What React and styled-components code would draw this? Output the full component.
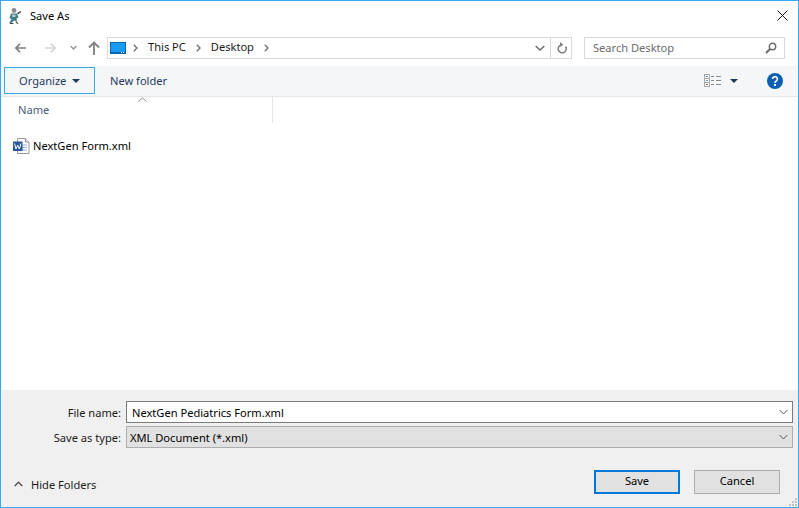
import React from 'react'
import styled, { createGlobalStyle } from 'styled-components'

const GlobalStyle = createGlobalStyle`
  html, body { margin: 0; padding: 0; background: #fff; }
  body { font-family: "Noto Sans", "Open Sans", sans-serif; font-size: 11.1px; color: #000; }
`

const Dialog = styled.div`
  box-sizing: border-box;
  width: 799px;
  height: 508px;
  border: 1px solid #3aa8f0;
  display: flex;
  flex-direction: column;
  background: #fff;
  position: relative;
  overflow: hidden;
`

const TitleBar = styled.div`
  height: 29px;
  flex: none;
  display: flex;
  align-items: center;
  padding: 0 10px 0 6px;
  gap: 7px;
`

const Title = styled.span`
  flex: 1;
  margin-bottom: 1px;
`

const NavRow = styled.div`
  height: 36px;
  flex: none;
  display: flex;
  align-items: center;
  padding: 0 13px;
`

const NavButton = styled.div`
  width: ${p => p.$w}px;
  margin-left: ${p => p.$ml || 0}px;
  display: flex;
  justify-content: center;
  align-items: center;
`

const AddressBar = styled.div`
  box-sizing: border-box;
  width: 465px;
  height: 22px;
  margin: 0 12px 0 6px;
  border: 1px solid #d9d9d9;
  display: flex;
  align-items: center;
  padding-left: 2px;
`

const CrumbText = styled.span`
  margin-bottom: 3px;
  color: #1a1a1a;
`

const CrumbSep = styled.span`
  display: flex;
  margin: 0 10px 0 ${p => p.$first ? 7 : 10}px;
`

const AddressEnd = styled.div`
  margin-left: auto;
  display: flex;
  align-items: center;
  height: 100%;
`

const RefreshBox = styled.div`
  width: 20px;
  height: 100%;
  border-left: 1px solid #d9d9d9;
  margin-left: 5px;
  display: flex;
  align-items: center;
  justify-content: center;
`

const SearchBox = styled.div`
  box-sizing: border-box;
  width: 201px;
  height: 22px;
  border: 1px solid #d9d9d9;
  display: flex;
  align-items: center;
  justify-content: space-between;
  padding: 0 7px 0 8px;
  color: #6d6d6d;
`

const SearchHint = styled.span`
  margin-bottom: 2px;
`

const Toolbar = styled.div`
  box-sizing: border-box;
  height: 31px;
  flex: none;
  background: #f5f6f7;
  border-bottom: 1px solid #e5e5e5;
  display: flex;
  align-items: center;
  padding: 0 15px 1px 3px;
`

const OrganizeButton = styled.div`
  box-sizing: border-box;
  width: 91px;
  height: 27px;
  border: 1px solid #3aa8e0;
  display: flex;
  align-items: center;
  padding-left: 14px;
  gap: 6px;
  color: #1e395b;
`

const NewFolder = styled.span`
  margin-left: 15px;
  color: #1e395b;
`

const ToolbarEnd = styled.div`
  margin-left: auto;
  display: flex;
  align-items: center;
`

const HeaderRow = styled.div`
  height: 26px;
  flex: none;
  display: flex;
  position: relative;
`

const NameColumn = styled.div`
  box-sizing: border-box;
  width: 272px;
  border-right: 1px solid #e5e5e5;
  padding: 5px 0 0 17px;
  color: #4c607a;
`

const SortCaret = styled.svg`
  position: absolute;
  left: 137px;
  top: 0;
`

const FileList = styled.div`
  flex: 1;
  padding: 15px 0 0 12px;
`

const FileRow = styled.div`
  display: flex;
  align-items: center;
  gap: 3px;
  height: 16px;
`

const FileName = styled.span`
  margin-bottom: 2px;
`

const Footer = styled.div`
  box-sizing: border-box;
  height: 117px;
  flex: none;
  background: #f0f0f0;
  padding: 11px 5px 0 0;
  display: flex;
  flex-direction: column;
`

const FieldRow = styled.div`
  display: flex;
  align-items: center;
  height: 22px;
  margin-bottom: 3px;
`

const FieldLabel = styled.label`
  width: 120px;
  text-align: right;
  margin-right: 5px;
  color: #1a1a1a;
`

const Field = styled.div`
  box-sizing: border-box;
  flex: 1;
  height: 100%;
  display: flex;
  align-items: center;
  justify-content: space-between;
  padding: 0 4px 0 ${p => p.$select ? 3 : 5}px;
  border: 1px solid ${p => p.$select ? '#adadad' : '#7a7a7a'};
  background: ${p => p.$select ? '#e1e1e1' : '#fff'};
`

const ActionRow = styled.div`
  display: flex;
  align-items: center;
  margin-top: 19px;
  padding: 0 13px;
`

const HideFolders = styled.div`
  display: flex;
  align-items: center;
  gap: 8px;
  margin: 4px auto 0 0;
  color: #1a1a1a;
`

const DialogButton = styled.div`
  box-sizing: border-box;
  width: 86px;
  height: 24px;
  margin-left: 14px;
  padding-bottom: 3px;
  background: #e1e1e1;
  border: ${p => p.$primary ? '2px solid #0078d7' : '1px solid #adadad'};
  display: flex;
  align-items: center;
  justify-content: center;
`

const Grip = styled.svg`
  position: absolute;
  right: 1px;
  bottom: 1px;
`

const Arrow = ({ dir = 'left', color }) => (
  <svg width="14" height="12" viewBox="0 0 14 12" style={{ transform: dir === 'right' ? 'scaleX(-1)' : 'none' }}>
    <path d="M13 6H2M6.500 1.500 2 6l4.500 4.500" fill="none" stroke={color} strokeWidth="1.800" />
  </svg>
)

const Chevron = ({ color = '#6d6d6d', w = 9, h = 5, sw = 1.200 }) => (
  <svg width={w} height={h + 2} viewBox={`0 0 ${w} ${h + 2}`}>
    <path d={`M.7 1 ${w / 2} ${h}l${w / 2 - 0.7}-${h - 1}`} fill="none" stroke={color} strokeWidth={sw} />
  </svg>
)

const Sep = () => (
  <svg width="5" height="8" viewBox="0 0 5 8">
    <path d="M.8.8 4 4 .8 7.200" fill="none" stroke="#6d6d6d" strokeWidth="1.300" />
  </svg>
)

const Caret = ({ color = '#1e395b' }) => (
  <svg width="8" height="4" viewBox="0 0 8 4"><path d="M0 0h8L4 4z" fill={color} /></svg>
)

const AppIcon = () => (
  <svg width="16" height="18" viewBox="0 0 16 18">
    <circle cx="7" cy="3.500" r="2.400" fill="#8a8f94" />
    <path d="M4 6.500h6l1.500 4-2 1 .5 3-3-1-3 3-1.500-1 2-3.500-2-1z" fill="#3f7f86" />
    <path d="M10 6l3.500-2 .8 1-3 2.500zM3 16h3.500v1H2.500zM9 14l2.500 2.500-1 .8L8.500 15z" fill="#4a4f55" />
    <path d="M5 7.500h3.500v2.500H5z" fill="#b9c2c6" />
  </svg>
)

const DesktopIcon = () => (
  <svg width="16" height="12" viewBox="0 0 16 12">
    <rect x=".5" y=".5" width="15" height="11" fill="#1a9cf5" stroke="#0a64ad" />
    <path d="M1 10h14v1H1z" fill="#0a64ad" />
    <path d="M11 10h1v1h-1zM13 10h1v1h-1z" fill="#fff" />
  </svg>
)

const RefreshIcon = () => (
  <svg width="11" height="13" viewBox="0 0 11 13">
    <path d="M6.500 3H5a4 4 0 1 0 4.500 1.500" fill="none" stroke="#7f7f7f" strokeWidth="1.500" />
    <path d="M4 0v5l3-2.500z" fill="#7f7f7f" />
  </svg>
)

const SearchIcon = () => (
  <svg width="12" height="12" viewBox="0 0 12 12">
    <circle cx="7.500" cy="4.500" r="3.200" fill="none" stroke="#6d6d6d" strokeWidth="1.400" />
    <path d="M5 7 1 11" stroke="#6d6d6d" strokeWidth="2" />
  </svg>
)

const ViewIcon = () => (
  <svg width="17" height="13" viewBox="0 0 17 13" style={{ marginRight: 9 }}>
    <rect x=".5" y=".5" width="5" height="12" fill="#fff" stroke="#a9a9a9" />
    <path d="M.5 4.500h5M.5 8.500h5" stroke="#a9a9a9" />
    <path d="M2 2h2v1H2z" fill="#4a8fc9" />
    <path d="M2 6h2v1H2z" fill="#5aa8d9" />
    <path d="M2 10h2v1H2z" fill="#c9453a" />
    <path d="M7 2.500h3M12 2.500h5M7 6.500h3M12 6.500h5M7 10.500h3M12 10.500h5" stroke="#8a8a8a" />
  </svg>
)

const HelpIcon = () => (
  <svg width="16" height="16" viewBox="0 0 16 16" style={{ marginLeft: 29 }}>
    <circle cx="8" cy="8" r="8" fill="#0a5fb4" />
    <path d="M5.600 6a2.400 2.300 0 1 1 3.800 1.900C8.500 8.600 8 9 8 10" fill="none" stroke="#fff" strokeWidth="1.700" />
    <rect x="7" y="11" width="2" height="2" fill="#fff" />
  </svg>
)

const WordIcon = () => (
  <svg width="17" height="16" viewBox="0 0 17 16">
    <path d="M4.500.5h8l3.500 3.500v11.500H4.500z" fill="#fff" stroke="#9a9a9a" />
    <path d="M12.500.5V4H16" fill="#eee" stroke="#9a9a9a" />
    <path d="M9 6.500h5v1H9zM9 9h5v1H9zM9 11.500h5v1H9z" fill="#8fb4de" />
    <rect x="0" y="3.500" width="9.500" height="9.500" fill="#2b579a" />
    <path d="M1.500 5.500 3 11l1.700-3.800L6.400 11l1.500-5.500" fill="none" stroke="#fff" strokeWidth="1" />
  </svg>
)

const CloseIcon = () => (
  <svg width="11" height="11" viewBox="0 0 11 11">
    <path d="M.5.500l10 10M10.500.500l-10 10" stroke="#111" strokeWidth="1" />
  </svg>
)

export default function App() {
  return (
    <>
      <GlobalStyle />
      <Dialog>
        <TitleBar>
          <AppIcon />
          <Title>Save As</Title>
          <CloseIcon />
        </TitleBar>

        <NavRow>
          <NavButton $w={13}><Arrow color="#7f7f7f" /></NavButton>
          <NavButton $w={13} $ml={17}><Arrow dir="right" color="#d6d6d6" /></NavButton>
          <NavButton $w={9} $ml={12}><Chevron w={7} h={4} color="#8a8a8a" /></NavButton>
          <NavButton $w={14} $ml={9}>
            <svg width="12" height="14" viewBox="0 0 12 14">
              <path d="M6 14V2M1 6.500 6 1.500l5 5" fill="none" stroke="#7f7f7f" strokeWidth="1.800" />
            </svg>
          </NavButton>
          <AddressBar>
            <DesktopIcon />
            <CrumbSep $first><Sep /></CrumbSep>
            <CrumbText>This PC</CrumbText>
            <CrumbSep><Sep /></CrumbSep>
            <CrumbText>Desktop</CrumbText>
            <CrumbSep><Sep /></CrumbSep>
            <AddressEnd>
              <Chevron w={10} h={5} sw={1.600} color="#6d6d6d" />
              <RefreshBox><RefreshIcon /></RefreshBox>
            </AddressEnd>
          </AddressBar>
          <SearchBox>
            <SearchHint>Search Desktop</SearchHint>
            <SearchIcon />
          </SearchBox>
        </NavRow>

        <Toolbar>
          <OrganizeButton>
            <span>Organize</span>
            <Caret />
          </OrganizeButton>
          <NewFolder>New folder</NewFolder>
          <ToolbarEnd>
            <ViewIcon />
            <Caret />
            <HelpIcon />
          </ToolbarEnd>
        </Toolbar>

        <HeaderRow>
          <NameColumn>Name</NameColumn>
          <SortCaret width="9" height="5" viewBox="0 0 9 5">
            <path d="M.5 4.500 4.500 1l4 3.500" fill="none" stroke="#8a8a8a" />
          </SortCaret>
        </HeaderRow>

        <FileList>
          <FileRow>
            <WordIcon />
            <FileName>NextGen Form.xml</FileName>
          </FileRow>
        </FileList>

        <Footer>
          <FieldRow>
            <FieldLabel>File name:</FieldLabel>
            <Field>
              <span>NextGen Pediatrics Form.xml</span>
              <Chevron w={9} h={5} color="#555" sw={1} />
            </Field>
          </FieldRow>
          <FieldRow>
            <FieldLabel>Save as type:</FieldLabel>
            <Field $select>
              <span>XML Document (*.xml)</span>
              <Chevron w={9} h={5} color="#555" sw={1} />
            </Field>
          </FieldRow>
          <ActionRow>
            <HideFolders>
              <svg width="9" height="6" viewBox="0 0 9 6">
                <path d="M.7 5 4.500 1.300 8.300 5" fill="none" stroke="#555" strokeWidth="1.500" />
              </svg>
              <span>Hide Folders</span>
            </HideFolders>
            <DialogButton $primary>Save</DialogButton>
            <DialogButton>Cancel</DialogButton>
          </ActionRow>
        </Footer>
        <Grip width="8" height="8" viewBox="0 0 8 8">
          <path d="M6 0h2v2H6zM3 3h2v2H3zM6 3h2v2H6zM0 6h2v2H0zM3 6h2v2H3zM6 6h2v2H6z" fill="#c4c4c4" />
        </Grip>
      </Dialog>
    </>
  )
}
